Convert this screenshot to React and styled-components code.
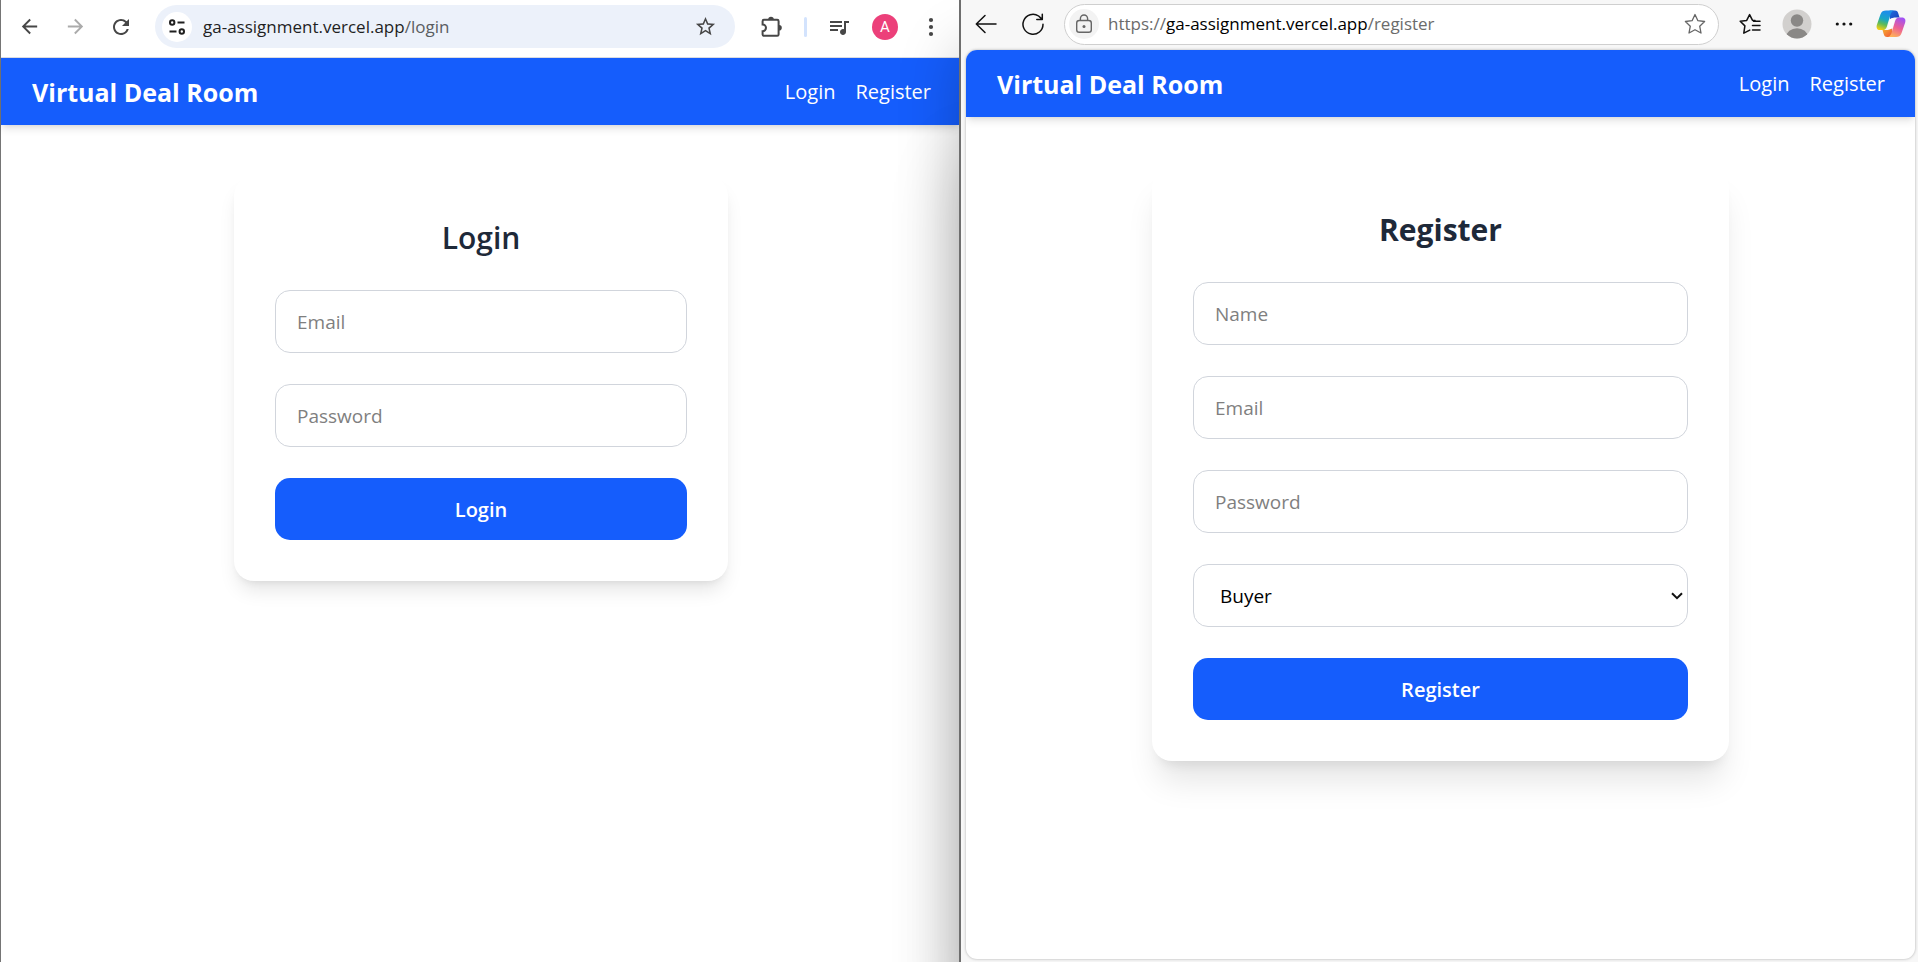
import React from "react";
import styled, { createGlobalStyle } from "styled-components";
import { MdArrowBack, MdArrowForward, MdRefresh, MdStarBorder, MdQueueMusic } from "react-icons/md";

const GlobalStyle = createGlobalStyle`
  *, *::before, *::after { box-sizing: border-box; }
  body {
    margin: 0;
    background: #ffffff;
    font-family: "Segoe UI", "Open Sans", "Noto Sans", sans-serif;
  }
  button, input, select { font: inherit; }
`;

const Desktop = styled.div`
  display: grid;
  grid-template-columns: 1fr 1fr;
  min-height: 100vh;
  overflow: hidden;
`;

/* The left window runs on under the border of the window in front of it. */
const ChromeWindow = styled.section`
  display: flex;
  flex-direction: column;
  min-width: 0;
  margin-right: -2px;
  border-left: 1px solid #757575;
  background: #ffffff;
`;

const EdgeWindow = styled.section`
  position: relative;
  display: flex;
  flex-direction: column;
  min-width: 0;
  border-left: 2px solid #6e6e6e;
  background: #f7f7f7;
  box-shadow: 0 48px 56px rgba(0, 0, 0, 0.22), 0 160px 64px rgba(0, 0, 0, 0.2);
`;

const ChromeBar = styled.header`
  display: flex;
  align-items: center;
  gap: 14px;
  height: 58px;
  padding: 0 14px 4px 12px;
  border-bottom: 1px solid #dadce3;
`;

const EdgeBar = styled.header`
  display: flex;
  align-items: center;
  gap: 15px;
  height: 50px;
  padding: 0 11px 2px 9px;
`;

const ToolButton = styled.button`
  display: grid;
  place-items: center;
  flex: none;
  width: 32px;
  height: 32px;
  padding: 0;
  border: 0;
  border-radius: 50%;
  background: transparent;
  color: ${(p) => p.$color || "#474747"};
`;

const Separator = styled.span`
  flex: none;
  width: 3px;
  height: 20px;
  margin: 0 2px;
  border-radius: 2px;
  background: #d3e3fd;
`;

const AddressBar = styled.div`
  display: flex;
  align-items: center;
  flex: 1;
  min-width: 0;
  gap: ${(p) => (p.$edge ? "9px" : "11px")};
  height: ${(p) => (p.$edge ? "41px" : "43px")};
  margin: ${(p) => (p.$edge ? "0" : "0 7px 0 4px")};
  padding: 0 ${(p) => (p.$edge ? "7px 0 4px" : "14px 0 7px")};
  border: ${(p) => (p.$edge ? "1px solid #cfcfcf" : "0")};
  border-radius: 22px;
  background: ${(p) => (p.$edge ? "#ffffff" : "#ecf1fa")};
`;

const SiteButton = styled(ToolButton)`
  width: 30px;
  height: 30px;
  background: ${(p) => p.$fill};
`;

const Address = styled.div`
  flex: 1;
  min-width: 0;
  overflow: hidden;
  white-space: nowrap;
  font-size: 17px;
  line-height: 24px;
  color: ${(p) => p.$muted};
`;

const Host = styled.span`
  color: ${(p) => p.$color};
`;

const ProfileInitial = styled.span`
  display: grid;
  place-items: center;
  width: 26px;
  height: 26px;
  border-radius: 50%;
  background: #ec407a;
  color: #ffffff;
  font-family: Roboto, sans-serif;
  font-size: 15px;
  line-height: 26px;
`;

const Page = styled.div`
  flex: 1;
  background: #ffffff;
`;

const EdgePage = styled(Page)`
  margin: 0 3px 3px 5px;
  overflow: hidden;
  border-radius: 11px;
  box-shadow: 0 0 3px rgba(0, 0, 0, 0.3);
`;

const NavBar = styled.nav`
  display: flex;
  align-items: center;
  justify-content: space-between;
  height: 67px;
  padding: 0 30px 0 31px;
  background: #155dfc;
  color: #ffffff;
  box-shadow: 0 5px 8px -1px rgba(0, 0, 0, 0.1), 0 3px 5px -3px rgba(0, 0, 0, 0.1);
`;

const Brand = styled.h1`
  margin: 0;
  font-size: 25px;
  font-weight: 700;
  line-height: 36px;
`;

const NavLinks = styled.div`
  display: flex;
  gap: 20px;
`;

const NavLink = styled.a`
  color: inherit;
  font-size: 20px;
  line-height: 30px;
  text-decoration: none;
`;

const Card = styled.form`
  display: flex;
  flex-direction: column;
  gap: 31px;
  width: 100%;
  max-width: ${(p) => (p.$wide ? "577px" : "494px")};
  margin: 51px auto;
  padding: 41px;
  border-radius: 20px;
  background: #ffffff;
  box-shadow: ${(p) =>
    p.$wide
      ? "0 26px 32px -6px rgba(0, 0, 0, 0.1), 0 10px 13px -8px rgba(0, 0, 0, 0.1)"
      : "0 13px 19px -4px rgba(0, 0, 0, 0.1), 0 5px 8px -5px rgba(0, 0, 0, 0.1)"};
`;

const CardTitle = styled.h2`
  margin: 0;
  color: #1e2939;
  font-size: 30px;
  font-weight: ${(p) => p.$weight};
  line-height: 42px;
  text-align: center;
`;

const TextInput = styled.input`
  width: 100%;
  height: 63px;
  padding: 0 21px;
  border: 1px solid #d1d5dc;
  border-radius: 15px;
  background: #ffffff;
  color: #000000;
  font-size: 19px;
  &::placeholder { color: #7f7f7f; opacity: 1; }
`;

const SelectField = styled.div`
  position: relative;
  display: flex;
`;

const RoleSelect = styled.select`
  appearance: none;
  width: 100%;
  height: 63px;
  padding: 0 26px;
  border: 1px solid #d1d5dc;
  border-radius: 15px;
  background: #ffffff;
  color: #000000;
  font-size: 19px;
`;

const SelectArrow = styled.svg`
  position: absolute;
  top: 50%;
  right: 5px;
  transform: translateY(-50%);
  pointer-events: none;
`;

const SubmitButton = styled.button`
  width: 100%;
  height: 62px;
  border: 0;
  border-radius: 15px;
  background: #155dfc;
  color: #ffffff;
  font-size: 20px;
  font-weight: 600;
`;

const TuneIcon = () => (
  <svg width="18" height="18" viewBox="0 0 18 18" fill="none" stroke="#1f1f1f" strokeWidth="2">
    <circle cx="4.2" cy="4.5" r="2.2" />
    <path d="M9.5 4.5H16.5M1.5 13.5H8.5" />
    <circle cx="13.8" cy="13.5" r="2.2" />
  </svg>
);

const PuzzleIcon = () => (
  <svg width="24" height="24" viewBox="0 0 24 24" fill="currentColor">
    <path d="M8.2 4.6a2.8 2.8 0 0 1 5.6 0z" />
    <path d="M19 10a2.8 2.8 0 0 1 0 5.6z" />
    <path
      d="M4 4.8H17.2Q18.6 4.8 18.6 6.2V19.4Q18.6 20.8 17.2 20.8H4Q2.6 20.8 2.6 19.4V16.2A3.4 3.4 0 0 0 2.6 9.4V6.2Q2.6 4.8 4 4.8Z"
      fill="none"
      stroke="currentColor"
      strokeWidth="2"
    />
  </svg>
);

const VerticalDots = () => (
  <svg width="6" height="20" viewBox="0 0 6 20" fill="currentColor">
    <circle cx="3" cy="3" r="2.1" />
    <circle cx="3" cy="10" r="2.1" />
    <circle cx="3" cy="17" r="2.1" />
  </svg>
);

const ThinBack = () => (
  <svg width="24" height="24" viewBox="0 0 24 24" fill="none" stroke="#111" strokeWidth="1.5" strokeLinecap="round" strokeLinejoin="round">
    <path d="M22 12H2.5M11 3.5L2.3 12L11 20.5" />
  </svg>
);

const ThinReload = () => (
  <svg width="24" height="24" viewBox="0 0 24 24" fill="none" stroke="#111" strokeWidth="1.5" strokeLinecap="round" strokeLinejoin="round">
    <path d="M22 12.2A10 10 0 1 1 17.6 4L21.2 7.4M21.3 2.2V7.6H15.8" />
  </svg>
);

const LockIcon = () => (
  <svg width="18" height="20" viewBox="0 0 18 20" fill="none" stroke="#666" strokeWidth="1.4">
    <rect x="1.7" y="6.5" width="14.6" height="11.8" rx="2.6" />
    <path d="M5.4 6.3V4.6A3.6 3.6 0 0 1 12.6 4.6V6.3" />
    <circle cx="9" cy="12.4" r="1.5" fill="#666" stroke="none" />
  </svg>
);

const ThinStar = () => (
  <svg width="22" height="22" viewBox="0 0 22 22" fill="none" stroke="#666" strokeWidth="1.3" strokeLinejoin="round">
    <path d="M11 1.5L13.9 7.7L20.6 8.5L15.7 13.2L17 20L11 16.7L5 20L6.3 13.2L1.4 8.5L8.1 7.7Z" />
  </svg>
);

const FavoritesIcon = () => (
  <svg width="24" height="24" viewBox="0 0 24 24" fill="none" stroke="#111" strokeWidth="1.5" strokeLinejoin="round" strokeLinecap="round">
    <path d="M17 8.6L14.4 8.2L11.6 2.6L8.7 8.4L2.2 9.3L6.9 13.9L5.8 21.2L11.8 18.1" />
    <path d="M15.5 9.2H22M14.5 13.6H22M14.5 18H22" />
  </svg>
);

const PersonIcon = () => (
  <svg width="30" height="30" viewBox="0 0 30 30">
    <clipPath id="person-clip">
      <circle cx="15" cy="15" r="14.5" />
    </clipPath>
    <circle cx="15" cy="15" r="14.5" fill="#d2d0ce" />
    <g clipPath="url(#person-clip)" fill="#8a8886">
      <circle cx="15" cy="11.5" r="6.2" />
      <ellipse cx="15" cy="28" rx="10.8" ry="8.8" />
    </g>
  </svg>
);

const HorizontalDots = () => (
  <svg width="18" height="6" viewBox="0 0 18 6" fill="#111">
    <circle cx="2.3" cy="3" r="1.6" />
    <circle cx="9" cy="3" r="1.6" />
    <circle cx="15.7" cy="3" r="1.6" />
  </svg>
);

const CopilotIcon = () => (
  <svg width="30" height="28" viewBox="-0.5 -0.5 30 28">
    <defs>
      <linearGradient id="cp-cool" x1="0.6" y1="0" x2="0.3" y2="1">
        <stop offset="0.1" stopColor="#1b8fe8" />
        <stop offset="0.45" stopColor="#18a7c4" />
        <stop offset="0.7" stopColor="#5cba5a" />
        <stop offset="1" stopColor="#f2cf13" />
      </linearGradient>
      <linearGradient id="cp-warm" x1="0.7" y1="0" x2="0.3" y2="1">
        <stop offset="0" stopColor="#a152f5" />
        <stop offset="0.5" stopColor="#ec5f96" />
        <stop offset="1" stopColor="#ffb357" />
      </linearGradient>
      <linearGradient id="cp-blue" x1="0" y1="0" x2="1" y2="1">
        <stop offset="0" stopColor="#1d6fe0" />
        <stop offset="1" stopColor="#1b3fb8" />
      </linearGradient>
      <linearGradient id="cp-red" x1="0" y1="0" x2="1" y2="1">
        <stop offset="0" stopColor="#f7b52c" />
        <stop offset="1" stopColor="#f0513a" />
      </linearGradient>
    </defs>
    <path d="M13 0H18.4C20.4 0 21.3 1.2 21.8 3L23 7H19.5C17 7 15 7.4 13.4 9Z" fill="url(#cp-blue)" />
    <path d="M16 26.5H10.6C8.6 26.5 7.7 25.3 7.2 23.5L6 19.5H9.5C12 19.5 14 19.1 15.6 17.5Z" fill="url(#cp-red)" />
    <path d="M9.5 0H17.5C15.2 .8 14.3 3 13.6 5.3L10.4 16C9.5 18.8 8.2 19.6 6.3 19.6H3.5C.5 19.6 -.5 17.2 .4 14.3L4 3.8C5 1 6.8 0 9.5 0Z" fill="url(#cp-cool)" />
    <path d="M19.5 26.5H11.5C13.8 25.7 14.7 23.5 15.4 21.2L18.6 10.5C19.5 7.7 20.8 6.9 22.7 6.9H25.5C28.5 6.9 29.5 9.3 28.6 12.2L25 22.7C24 25.5 22.2 26.5 19.5 26.5Z" fill="url(#cp-warm)" />
    <path d="M17.8 8H14.6C13.9 8.2 13.6 8.6 13.4 9.2L11.2 18.5H14.4C15.1 18.3 15.4 17.9 15.6 17.3L18.4 8.6Z" fill="#fdfdfd" />
  </svg>
);

function SiteNav() {
  return (
    <NavBar>
      <Brand>Virtual Deal Room</Brand>
      <NavLinks>
        <NavLink href="#login">Login</NavLink>
        <NavLink href="#register">Register</NavLink>
      </NavLinks>
    </NavBar>
  );
}

function LoginWindow() {
  return (
    <ChromeWindow>
      <ChromeBar>
        <ToolButton aria-label="Back"><MdArrowBack size={23} /></ToolButton>
        <ToolButton aria-label="Forward" $color="#ababab"><MdArrowForward size={23} /></ToolButton>
        <ToolButton aria-label="Reload"><MdRefresh size={24} /></ToolButton>
        <AddressBar>
          <SiteButton aria-label="Site information" $fill="#ffffff"><TuneIcon /></SiteButton>
          <Address role="textbox" aria-label="Address" tabIndex={0} $muted="#5a5d61">
            <Host $color="#1f1f1f">ga-assignment.vercel.app</Host>/login
          </Address>
          <ToolButton aria-label="Bookmark"><MdStarBorder size={23} /></ToolButton>
        </AddressBar>
        <ToolButton aria-label="Extensions"><PuzzleIcon /></ToolButton>
        <Separator />
        <ToolButton aria-label="Media controls"><MdQueueMusic size={24} /></ToolButton>
        <ToolButton aria-label="Profile"><ProfileInitial>A</ProfileInitial></ToolButton>
        <ToolButton aria-label="Menu"><VerticalDots /></ToolButton>
      </ChromeBar>
      <Page>
        <SiteNav />
        <Card>
          <CardTitle $weight={600}>Login</CardTitle>
          <TextInput type="email" placeholder="Email" aria-label="Email" />
          <TextInput type="password" placeholder="Password" aria-label="Password" />
          <SubmitButton type="button">Login</SubmitButton>
        </Card>
      </Page>
    </ChromeWindow>
  );
}

function RegisterWindow() {
  return (
    <EdgeWindow>
      <EdgeBar>
        <ToolButton aria-label="Back"><ThinBack /></ToolButton>
        <ToolButton aria-label="Refresh"><ThinReload /></ToolButton>
        <AddressBar $edge>
          <SiteButton aria-label="Site information" $fill="#f3f3f3"><LockIcon /></SiteButton>
          <Address role="textbox" aria-label="Address" tabIndex={0} $muted="#6b6b6b">
            https://<Host $color="#000000">ga-assignment.vercel.app</Host>/register
          </Address>
          <ToolButton aria-label="Favorite"><ThinStar /></ToolButton>
        </AddressBar>
        <ToolButton aria-label="Favorites"><FavoritesIcon /></ToolButton>
        <ToolButton aria-label="Profile"><PersonIcon /></ToolButton>
        <ToolButton aria-label="Settings"><HorizontalDots /></ToolButton>
        <ToolButton aria-label="Copilot"><CopilotIcon /></ToolButton>
      </EdgeBar>
      <EdgePage>
        <SiteNav />
        <Card $wide>
          <CardTitle $weight={700}>Register</CardTitle>
          <TextInput type="text" placeholder="Name" aria-label="Name" />
          <TextInput type="email" placeholder="Email" aria-label="Email" />
          <TextInput type="password" placeholder="Password" aria-label="Password" />
          <SelectField>
            <RoleSelect aria-label="Role" defaultValue="buyer">
              <option value="buyer">Buyer</option>
              <option value="seller">Seller</option>
            </RoleSelect>
            <SelectArrow width="12" height="8" viewBox="0 0 12 8" fill="none" stroke="#111" strokeWidth="2">
              <path d="M1 1.2L6 6.2L11 1.2" />
            </SelectArrow>
          </SelectField>
          <SubmitButton type="button">Register</SubmitButton>
        </Card>
      </EdgePage>
    </EdgeWindow>
  );
}

export default function App() {
  return (
    <>
      <GlobalStyle />
      <Desktop>
        <LoginWindow />
        <RegisterWindow />
      </Desktop>
    </>
  );
}
